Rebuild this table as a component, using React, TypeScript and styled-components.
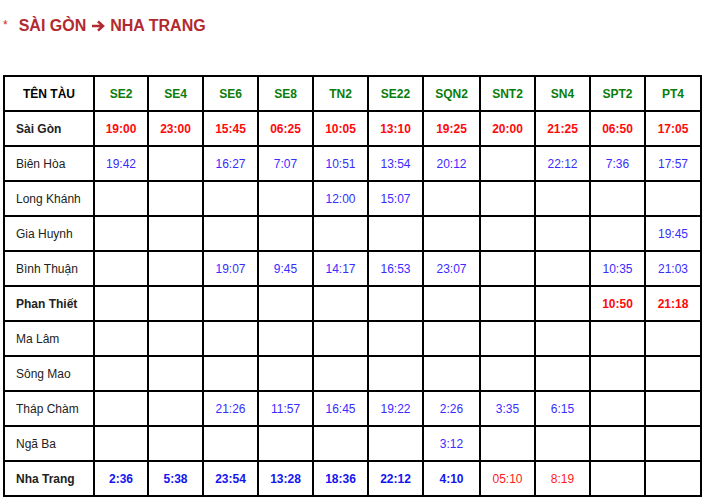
import React from 'react';
import styled, { createGlobalStyle } from 'styled-components';

const GlobalStyle = createGlobalStyle`
  html, body {
    margin: 0;
    padding: 0;
    background: #fff;
  }
  body {
    font-family: 'Liberation Sans', Arial, sans-serif;
  }
`;

const Page = styled.div`
  width: 702px;
  height: 499px;
  padding: 0 0 0 3px;
  box-sizing: border-box;
  overflow: hidden;
`;

const Title = styled.h2`
  display: flex;
  align-items: flex-start;
  margin: 0;
  padding-top: 17px;
  height: 75px;
  box-sizing: border-box;
  font-size: 16px;
  font-weight: bold;
  color: #b22a2f;
  line-height: 18px;
`;

const Star = styled.span`
  font-size: 12px;
  font-weight: normal;
  color: #d21f1f;
  line-height: 12px;
  margin: 2px 11px 0 0;
`;

const Arrow = styled.svg`
  width: 14px;
  height: 12px;
  margin: 3px 5px 0 5px;
`;

const Table = styled.table`
  border-collapse: collapse;
  table-layout: fixed;
  width: 699px;
  border: 2px solid #000;
  font-size: 12px;
`;

const Row = styled.tr`
  height: 35px;
`;

const HeadCell = styled.th<{ $first?: boolean }>`
  border: 2px solid #000;
  padding: 0;
  text-align: center;
  font-weight: bold;
  color: ${(p) => (p.$first ? '#000' : '#0a7d0a')};
`;

const Station = styled.td<{ $bold?: boolean }>`
  border: 2px solid #000;
  padding: 0 0 0 11px;
  text-align: left;
  color: #222;
  font-weight: ${(p) => (p.$bold ? 'bold' : 'normal')};
`;

type Kind = 'dep' | 'mid' | 'arr' | 'late';

const colors: Record<Kind, string> = {
  dep: '#ff0a0a',
  mid: '#3a2cff',
  arr: '#1414f0',
  late: '#ff1a1a',
};

const Time = styled.td<{ $kind: Kind }>`
  border: 2px solid #000;
  padding: 0;
  text-align: center;
  color: ${(p) => colors[p.$kind]};
  font-weight: ${(p) => (p.$kind === 'dep' || p.$kind === 'arr' ? 'bold' : 'normal')};
`;

const trains = ['SE2', 'SE4', 'SE6', 'SE8', 'TN2', 'SE22', 'SQN2', 'SNT2', 'SN4', 'SPT2', 'PT4'];
const widths = [90, 54, 55, 55, 55, 55, 55, 57, 55, 55, 55, 56];

interface Stop {
  name: string;
  bold?: boolean;
  kind: Kind;
  times: string[];
  kinds?: Record<number, Kind>;
}

const stops: Stop[] = [
  {
    name: 'Sài Gòn',
    bold: true,
    kind: 'dep',
    times: ['19:00', '23:00', '15:45', '06:25', '10:05', '13:10', '19:25', '20:00', '21:25', '06:50', '17:05'],
  },
  { name: 'Biên Hòa', kind: 'mid', times: ['19:42', '', '16:27', '7:07', '10:51', '13:54', '20:12', '', '22:12', '7:36', '17:57'] },
  { name: 'Long Khánh', kind: 'mid', times: ['', '', '', '', '12:00', '15:07', '', '', '', '', ''] },
  { name: 'Gia Huynh', kind: 'mid', times: ['', '', '', '', '', '', '', '', '', '', '19:45'] },
  { name: 'Bình Thuận', kind: 'mid', times: ['', '', '19:07', '9:45', '14:17', '16:53', '23:07', '', '', '10:35', '21:03'] },
  { name: 'Phan Thiết', bold: true, kind: 'dep', times: ['', '', '', '', '', '', '', '', '', '10:50', '21:18'] },
  { name: 'Ma Lâm', kind: 'mid', times: ['', '', '', '', '', '', '', '', '', '', ''] },
  { name: 'Sông Mao', kind: 'mid', times: ['', '', '', '', '', '', '', '', '', '', ''] },
  { name: 'Tháp Chàm', kind: 'mid', times: ['', '', '21:26', '11:57', '16:45', '19:22', '2:26', '3:35', '6:15', '', ''] },
  { name: 'Ngã Ba', kind: 'mid', times: ['', '', '', '', '', '', '3:12', '', '', '', ''] },
  {
    name: 'Nha Trang',
    bold: true,
    kind: 'arr',
    times: ['2:36', '5:38', '23:54', '13:28', '18:36', '22:12', '4:10', '05:10', '8:19', '', ''],
    kinds: { 7: 'late', 8: 'late' },
  },
];

export default function App() {
  return (
    <>
      <GlobalStyle />
      <Page>
        <Title>
          <Star>*</Star>
          SÀI GÒN
          <Arrow viewBox="0 0 14 12">
            <path d="M1 6 H11.5 M7 1.3 L12 6 L7 10.7" fill="none" stroke="#b22a2f" strokeWidth="2.5" />
          </Arrow>
          NHA TRANG
        </Title>
        <Table>
          <colgroup>
            {widths.map((w, i) => (
              <col key={i} style={{ width: w }} />
            ))}
          </colgroup>
          <thead>
            <Row>
              <HeadCell $first>TÊN TÀU</HeadCell>
              {trains.map((t) => (
                <HeadCell key={t}>{t}</HeadCell>
              ))}
            </Row>
          </thead>
          <tbody>
            {stops.map((s) => (
              <Row key={s.name}>
                <Station $bold={s.bold}>{s.name}</Station>
                {s.times.map((t, i) => (
                  <Time key={i} $kind={s.kinds?.[i] ?? s.kind}>
                    {t}
                  </Time>
                ))}
              </Row>
            ))}
          </tbody>
        </Table>
      </Page>
    </>
  );
}
